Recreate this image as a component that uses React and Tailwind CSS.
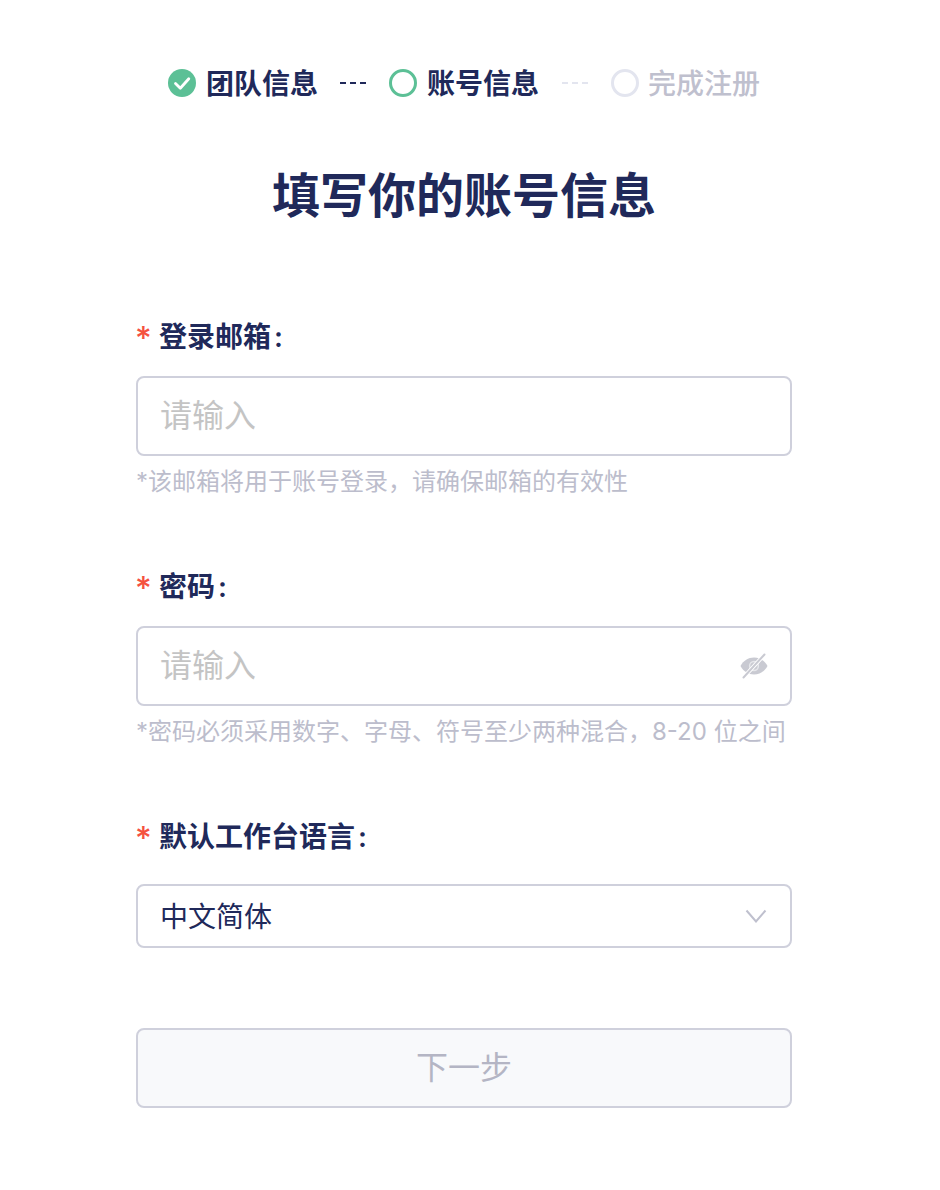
const font = { fontFamily: '"Inter", "Noto Sans CJK SC", sans-serif' };

function Dashes({ className }) {
  return (
    <div className={`flex w-[26px] justify-between ${className}`}>
      <span className="h-[2px] w-[6px] bg-current" />
      <span className="h-[2px] w-[6px] bg-current" />
      <span className="h-[2px] w-[6px] bg-current" />
    </div>
  );
}

function Label({ children }) {
  return (
    <div className="flex h-[40px] items-center whitespace-nowrap text-[28px] font-semibold leading-[40px] text-[#20295a]">
      <span className="mr-[9px] mt-[3px] -ml-[1px] w-[15px] text-[32px] font-medium text-[#f5523f]">*</span>
      <span>{children}</span>
      <span className="ml-[3px]">:</span>
    </div>
  );
}

function Field({ hint, children }) {
  return (
    <div>
      <div className="mt-[19px] flex h-[80px] items-center justify-between rounded-[8px] border-2 border-[#cfd0dc] bg-white pl-[22px] pr-[22px]">
        <span className="text-[32px] leading-[44px] text-[#c4c4c4]">请输入</span>
        {children}
      </div>
      <p className="mt-[9px] h-[34px] whitespace-nowrap text-[24px] leading-[34px] text-[#bcbdcc]">{hint}</p>
    </div>
  );
}

export default function App() {
  return (
    <div className="min-h-[1190px] w-[940px] bg-white" style={font}>
      <div className="flex h-[166px] items-center pl-[168px]">
        <div className="flex items-center whitespace-nowrap">
          <svg width="28" height="28" viewBox="0 0 28 28" className="shrink-0">
            <circle cx="14" cy="14" r="14" fill="#5cc096" />
            <path d="M7.5 14.5l4.8 4.8 8.5-9.6" fill="none" stroke="#fff" strokeWidth="2.8" strokeLinecap="round" strokeLinejoin="round" />
          </svg>
          <span className="ml-[10px] mt-[2px] w-[111px] text-[28px] font-semibold leading-[40px] text-[#20295a]">团队信息</span>
          <Dashes className="ml-[23px] text-[#20295a]" />
          <span className="ml-[23px] h-[28px] w-[28px] shrink-0 rounded-full border-[3px] border-[#5cc096]" />
          <span className="ml-[10px] mt-[2px] w-[111px] text-[28px] font-semibold leading-[40px] text-[#20295a]">账号信息</span>
          <Dashes className="ml-[24px] text-[#e3e5ef]" />
          <span className="ml-[23px] h-[28px] w-[28px] shrink-0 rounded-full border-[3px] border-[#e3e5ef]" />
          <span className="ml-[9px] mt-[2px] w-[112px] text-[28px] font-medium leading-[40px] text-[#bfc0ce]">完成注册</span>
        </div>
      </div>

      <h1 className="h-[60px] whitespace-nowrap pl-[272px] text-[48px] font-bold leading-[60px] text-[#20295a]">填写你的账号信息</h1>

      <div className="ml-[136px] w-[656px] pt-[91px]">
        <Label>登录邮箱</Label>
        <Field hint="*该邮箱将用于账号登录，请确保邮箱的有效性" />

        <div className="mt-[68px]">
          <Label>密码</Label>
          <Field hint="*密码必须采用数字、字母、符号至少两种混合，8-20 位之间">
            <svg width="28" height="26" viewBox="0 0 28 26" className="shrink-0">
              <path d="M0.5 13C3.5 7.5 8.2 4.5 14 4.5S24.5 7.5 27.5 13C24.5 18.5 19.8 21.5 14 21.5S3.5 18.5 0.5 13Z" fill="#c9cad2" />
              <circle cx="14" cy="13" r="4.4" fill="none" stroke="#e6e7eb" strokeWidth="1.5" />
              <path d="M3.5 24.5L24.5 1.5" stroke="#fff" strokeWidth="4" />
              <path d="M3.5 24.5L24.5 1.5" stroke="#c9cad2" strokeWidth="2" strokeLinecap="round" />
            </svg>
          </Field>
        </div>

        <div className="mt-[68px]">
          <Label>默认工作台语言</Label>
          <div className="mt-[27px] flex h-[64px] items-center justify-between rounded-[8px] border-2 border-[#cfd0dc] bg-white pl-[22px] pr-[23px]">
            <span className="mt-[1px] text-[28px] leading-[40px] text-[#20295a]">中文简体</span>
            <svg width="22" height="14" viewBox="0 0 22 14" className="shrink-0">
              <path d="M1.5 1.5L11 12.5L20.5 1.5" fill="none" stroke="#bfc0ce" strokeWidth="2" />
            </svg>
          </div>
        </div>

        <button className="mt-[80px] flex h-[80px] w-full items-center justify-center rounded-[8px] border-2 border-[#cfd0dc] bg-[#f8f9fb] text-[32px] text-[#b4b5c4]">
          下一步
        </button>
      </div>
    </div>
  );
}
